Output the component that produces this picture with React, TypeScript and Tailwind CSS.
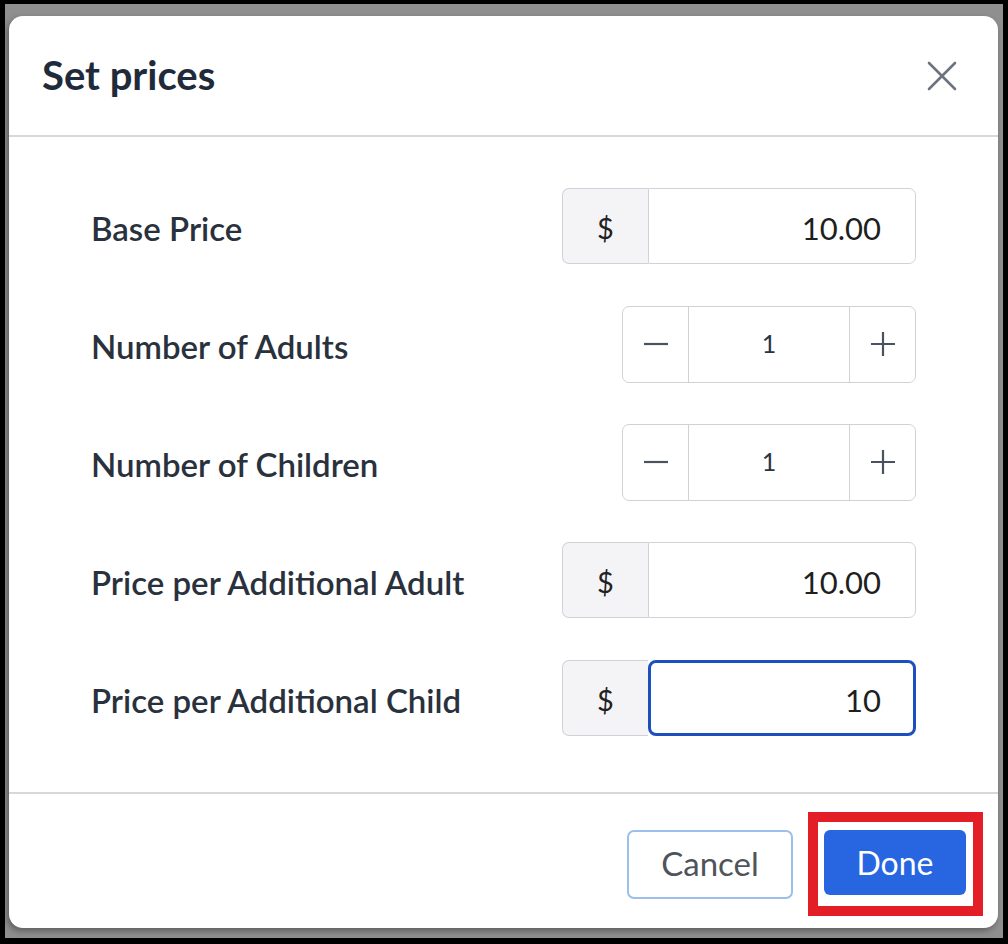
import { useState } from "react";

const font = { fontFamily: "Lato, 'Open Sans', sans-serif" };

const PriceField = ({ value, focused }: { value: string; focused?: boolean }) => {
  return (
    <div className="flex h-[76px] w-[354px]">
      <div className="flex w-[86px] items-center justify-center rounded-l-[7px] border border-r-0 border-[#cfd3d8] bg-[#f4f4f6] pt-[3px] text-[29px] text-[#222]">
        $
      </div>
      {focused ? (
        <div className="flex flex-1 items-center justify-end rounded-[8px] border-[3px] border-[#1d4fbf] pr-[32px] pt-[4px] text-[31px] text-[#1f1f1f]">
          {value}
        </div>
      ) : (
        <div className="flex flex-1 items-center justify-end rounded-r-[7px] border border-[#cfd3d8] pr-[34px] pt-[4px] text-[31px] text-[#1f1f1f]">
          {value}
        </div>
      )}
    </div>
  );
};

const Stepper = ({ value }: { value: number }) => {
  const [n, setN] = useState(value);
  return (
    <div className="flex h-[77px] w-[294px] rounded-[7px] border border-[#cfd3d8]">
      <button
        onClick={() => setN(n - 1)}
        className="flex w-[66px] items-center justify-center border-r border-[#cfd3d8]"
      >
        <svg width="26" height="26" viewBox="0 0 26 26">
          <path d="M1 13h24" stroke="#4a5260" strokeWidth="2.2" />
        </svg>
      </button>
      <div className="flex flex-1 items-center justify-center text-[25px] text-[#2b3442]">{n}</div>
      <button
        onClick={() => setN(n + 1)}
        className="flex w-[66px] items-center justify-center border-l border-[#cfd3d8]"
      >
        <svg width="26" height="26" viewBox="0 0 26 26">
          <path d="M1 13h24M13 1v24" stroke="#4a5260" strokeWidth="2.2" />
        </svg>
      </button>
    </div>
  );
};

const rows = [
  { label: "Base Price", kind: "price", value: "10.00" },
  { label: "Number of Adults", kind: "step", value: "1" },
  { label: "Number of Children", kind: "step", value: "1" },
  { label: "Price per Additional Adult", kind: "price", value: "10.00" },
  { label: "Price per Additional Child", kind: "price", value: "10", focused: true },
];

export default function App() {
  return (
    <div className="flex h-[944px] w-[1008px] bg-black pb-[6px] pl-[5px] pr-[5px] pt-[4px]" style={font}>
      <div className="flex flex-1 bg-[#8f8f8f] pb-[10px] pl-[4px] pr-[5px] pt-[12px]">
        <div className="flex flex-1 flex-col rounded-[14px] bg-white shadow-[-2px_3px_6px_rgba(0,0,0,0.35)]">
          <div className="flex h-[121px] items-center justify-between border-b-2 border-[#d6d8dc] pl-[33px] pr-[40px]">
            <h2 className="pb-[2px] text-[40px] font-bold text-[#1f2b3b]">Set prices</h2>
            <svg width="32" height="32" viewBox="0 0 32 32">
              <path d="M3 3l26 26M29 3L3 29" stroke="#6e7380" strokeWidth="2.6" strokeLinecap="round" />
            </svg>
          </div>

          <div className="flex flex-col gap-[42px] border-b-2 border-[#d6d8dc] px-[82px] pb-[56px] pt-[51px]">
            {rows.map((r) => (
              <div key={r.label} className="flex h-[76px] items-center justify-between">
                <span className="pt-[6px] text-[33px] font-semibold text-[#29313d]">{r.label}</span>
                {r.kind === "price" ? (
                  <PriceField value={r.value} focused={r.focused} />
                ) : (
                  <Stepper value={Number(r.value)} />
                )}
              </div>
            ))}
          </div>

          <div className="flex flex-1 items-center justify-end gap-[15px] pr-[15px] pt-[6px]">
            <button className="h-[69px] w-[166px] rounded-[7px] border-2 border-[#9cc0ea] text-[33px] text-[#50545a]">
              Cancel
            </button>
            <div className="border-[10px] border-[#e41e26] pb-[11px] pl-[6px] pr-[7px] pt-[8px]">
              <button className="h-[65px] w-[142px] rounded-[6px] bg-[#2766e0] text-[32px] text-white">
                Done
              </button>
            </div>
          </div>
        </div>
      </div>
    </div>
  );
}
